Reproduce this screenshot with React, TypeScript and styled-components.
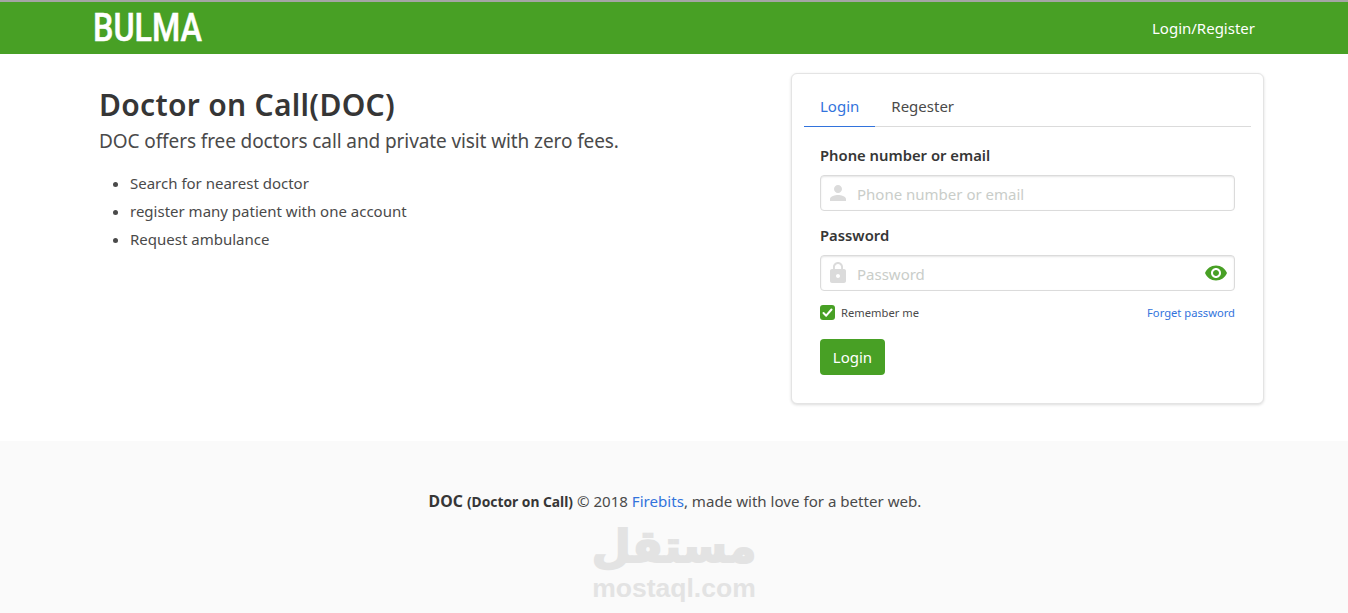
import React from 'react'
import styled, { createGlobalStyle } from 'styled-components'
import { MdPerson, MdLock, MdVisibility } from 'react-icons/md'

const green = '#48a025'
const blue = '#3273dc'

const GlobalStyle = createGlobalStyle`
  html, body {
    margin: 0;
    padding: 0;
    background: #fff;
  }
  body {
    font-family: "Noto Sans", "Open Sans", sans-serif;
    color: #4a4a4a;
    font-size: 15px;
  }
`

const Page = styled.div`
  height: 613px;
  overflow: hidden;
  display: flex;
  flex-direction: column;
`

const Navbar = styled.nav`
  height: 52px;
  flex: none;
  border-top: 2px solid #a5a5a5;
  background: ${green};
  display: flex;
  align-items: center;
  justify-content: space-between;
  padding: 0 93px 0 93px;
`

const Logo = styled.span`
  display: inline-block;
  font-family: Roboto, sans-serif;
  font-weight: 500;
  font-size: 38px;
  line-height: 52px;
  color: #fff;
  -webkit-text-stroke: 0.5px #fff;
  transform: scaleX(0.85);
  transform-origin: left center;
`

const NavLink = styled.a`
  color: #fff;
  font-size: 15px;
`

const Hero = styled.section`
  flex: none;
  height: 387px;
  box-sizing: border-box;
  padding: 19px 84px 0 99px;
  display: flex;
  justify-content: space-between;
`

const Intro = styled.div`
  padding-top: 14px;
`

const Title = styled.h1`
  margin: 0;
  font-size: 30px;
  line-height: 36px;
  font-weight: 600;
  letter-spacing: 0.3px;
  color: #363636;
`

const Subtitle = styled.p`
  margin: 1px 0 0;
  font-size: 19px;
  line-height: 34px;
  letter-spacing: -0.1px;
  color: #4a4a4a;
`

const Features = styled.ul`
  margin: 11px 0 0;
  padding: 0 0 0 31px;
  font-size: 15px;
  line-height: 28px;
`

const Card = styled.div`
  width: 473px;
  height: 331px;
  box-sizing: border-box;
  padding: 12px;
  background: #fff;
  border: 1px solid #e4e4e4;
  border-radius: 6px;
  box-shadow: 0 1px 3px rgba(10, 10, 10, 0.14);
`

const Tabs = styled.div`
  display: flex;
  border-bottom: 1px solid #dbdbdb;
`

const Tab = styled.a<{ $active?: boolean }>`
  padding: 0 16px;
  height: 40px;
  line-height: 41px;
  font-size: 15px;
  margin-bottom: -1px;
  color: ${({ $active }) => ($active ? blue : '#4a4a4a')};
  border-bottom: 1px solid ${({ $active }) => ($active ? blue : 'transparent')};
`

const Form = styled.form`
  padding: 17px 16px 0;
`

const Label = styled.label`
  display: block;
  font-weight: 600;
  font-size: 14.8px;
  line-height: 22px;
  color: #363636;
  margin-bottom: 9px;
`

const InputBox = styled.div`
  height: 36px;
  box-sizing: border-box;
  border: 1px solid #dbdbdb;
  border-radius: 4px;
  box-shadow: inset 0 1px 2px rgba(10, 10, 10, 0.1);
  display: flex;
  align-items: center;
  padding: 0 6px 0 5px;
  margin-bottom: 13px;
  color: #dbdbdb;
`

const Input = styled.input`
  flex: 1;
  min-width: 0;
  border: 0;
  outline: 0;
  background: transparent;
  margin: 2px 0 0 7px;
  padding: 0;
  font: inherit;
  font-size: 15px;
  &::placeholder {
    color: #c9cdc9;
    opacity: 1;
  }
`

const Options = styled.div`
  display: flex;
  align-items: center;
  justify-content: space-between;
  margin-top: 14px;
  font-size: 11.2px;
`

const Remember = styled.span`
  display: flex;
  align-items: center;
  gap: 6px;
`

const Check = styled.span`
  width: 15px;
  height: 15px;
  border-radius: 3px;
  background: ${green};
  display: flex;
  align-items: center;
  justify-content: center;
`

const SmallLink = styled.a`
  color: ${blue};
`

const Button = styled.button`
  display: block;
  margin-top: 19px;
  width: 65px;
  height: 36px;
  border: 0;
  border-radius: 4px;
  background: ${green};
  color: #fff;
  font: inherit;
  font-size: 15px;
`

const Footer = styled.footer`
  flex: 1;
  background: #fafafa;
  padding: 49px 0 0 2px;
  display: flex;
  flex-direction: column;
  align-items: center;
`

const FooterText = styled.p`
  margin: 0;
  font-size: 15.1px;
  line-height: 22px;
  strong { color: #363636; font-weight: 700; font-size: 15.8px; }
  small { font-size: 13.8px; }
  a { color: ${blue}; }
`

const Watermark = styled.div`
  margin: 8px 2px 0 0;
  display: flex;
  flex-direction: column;
  align-items: center;
  color: #e3e3e3;
  font-weight: 700;
`

const WatermarkArabic = styled.span`
  font-family: "DejaVu Sans", sans-serif;
  font-size: 45px;
  line-height: 52px;
  -webkit-text-stroke: 2px #e3e3e3;
`

const WatermarkLatin = styled.span`
  font-family: "Liberation Sans", sans-serif;
  font-size: 26.5px;
  line-height: 26px;
  margin-top: 2px;
`

export default function App() {
  return (
    <Page>
      <GlobalStyle />
      <Navbar>
        <Logo>BULMA</Logo>
        <NavLink>Login/Register</NavLink>
      </Navbar>
      <Hero>
        <Intro>
          <Title>Doctor on Call(DOC)</Title>
          <Subtitle>DOC offers free doctors call and private visit with zero fees.</Subtitle>
          <Features>
            <li>Search for nearest doctor</li>
            <li>register many patient with one account</li>
            <li>Request ambulance</li>
          </Features>
        </Intro>
        <Card>
          <Tabs>
            <Tab $active>Login</Tab>
            <Tab>Regester</Tab>
          </Tabs>
          <Form>
            <Label>Phone number or email</Label>
            <InputBox>
              <MdPerson size={24} />
              <Input placeholder="Phone number or email" />
            </InputBox>
            <Label>Password</Label>
            <InputBox>
              <MdLock size={24} />
              <Input placeholder="Password" />
              <MdVisibility size={24} color={green} />
            </InputBox>
            <Options>
              <Remember>
                <Check>
                  <svg width="11" height="11" viewBox="0 0 11 11" fill="none">
                    <path d="M1.5 6 L4.2 8.7 L9.5 2.5" stroke="#fff" strokeWidth="2" strokeLinecap="round" strokeLinejoin="round" />
                  </svg>
                </Check>
                Remember me
              </Remember>
              <SmallLink>Forget password</SmallLink>
            </Options>
            <Button type="button">Login</Button>
          </Form>
        </Card>
      </Hero>
      <Footer>
        <FooterText>
          <strong>DOC <small>(Doctor on Call)</small></strong> © 2018 <a>Firebits</a>, made with love for a better web.
        </FooterText>
        <Watermark>
          <WatermarkArabic>مستقل</WatermarkArabic>
          <WatermarkLatin>mostaql.com</WatermarkLatin>
        </Watermark>
      </Footer>
    </Page>
  )
}
